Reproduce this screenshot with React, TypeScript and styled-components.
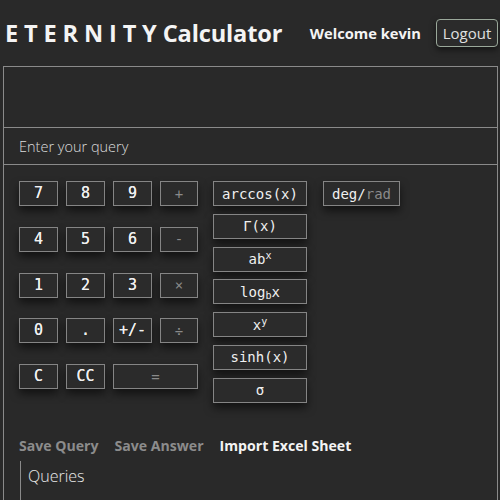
import React from "react";
import styled, { createGlobalStyle } from "styled-components";

const Global = createGlobalStyle`
  html, body { margin: 0; padding: 0; background: #292929; }
  body { font-family: "Open Sans", "Noto Sans", sans-serif; color: #f2f2f2; }
  * { box-sizing: border-box; }
`;

const Page = styled.div`
  width: 500px;
  height: 500px;
  overflow: hidden;
  background: #292929;
`;

const Header = styled.header`
  display: flex;
  align-items: center;
  height: 66px;
  padding: 0 2px 0 5px;
`;

const Title = styled.h1`
  margin: 0;
  font-size: 23.6px;
  font-weight: 700;
  color: #f4f4f4;
  white-space: pre;
  letter-spacing: -0.15px;
`;

const Welcome = styled.span`
  margin-left: auto;
  font-size: 14.7px;
  font-weight: 700;
  color: #f4f4f4;
`;

const LogoutButton = styled.button`
  margin-left: 15px;
  height: 28px;
  width: 62px;
  padding: 0;
  border: 1px solid #9aa89a;
  border-radius: 4px;
  background: #2b2b2b;
  color: #e0e0e0;
  font-family: "Open Sans", sans-serif;
  font-size: 15px;
  box-shadow: 0 3px 6px rgba(0, 0, 0, 0.5);
`;

const Panel = styled.section`
  margin-left: 3px;
  width: 495px;
  border-top: 1px solid #8a8a8a;
  border-left: 1px solid #8a8a8a;
  border-right: 1px solid #8a8a8a;
  height: 434px;
`;

const Display = styled.div`
  height: 61px;
  border-bottom: 1px solid #8a8a8a;
`;

const QueryInput = styled.div`
  height: 37px;
  border-bottom: 1px solid #8a8a8a;
  display: flex;
  align-items: center;
  padding-left: 15px;
  font-size: 14.5px;
  font-weight: 300;
  color: #dcdcdc;
`;

const KeypadArea = styled.div`
  display: flex;
  align-items: flex-start;
  padding: 16px 0 0 15px;
`;

const Digits = styled.div`
  display: grid;
  grid-template-columns: 39px 39px 39px 38px;
  grid-auto-rows: 25px;
  column-gap: 8px;
  row-gap: 20.8px;
`;

const Key = styled.button<{ $muted?: boolean; $span?: number }>`
  grid-column: span ${(p) => p.$span ?? 1};
  padding: 0;
  border: 1px solid #858585;
  background: #2b2b2b;
  color: ${(p) => (p.$muted ? "#8a8a8a" : "#f0f0f0")};
  font-family: "DejaVu Sans Mono", "Liberation Mono", monospace;
  font-size: 14px;
  font-weight: 400;
  box-shadow: 0 5px 8px rgba(0, 0, 0, 0.55);
  line-height: 1;
`;

const DigitKey = styled(Key)`
  font-size: 15px;
  text-shadow: 0 0 0.4px #f0f0f0;
`;

const Functions = styled.div`
  display: flex;
  flex-direction: column;
  gap: 7.8px;
  margin-left: 15px;
`;

const FnKey = styled(Key)`
  width: 94px;
  height: 25px;
`;

const Sup = styled.sup`
  font-size: 0.72em;
  line-height: 0;
  vertical-align: 0.45em;
`;

const Sub = styled.sub`
  font-size: 0.72em;
  line-height: 0;
  vertical-align: -0.15em;
`;

const DegKey = styled(Key)`
  width: 77px;
  height: 25px;
  margin-left: 16px;
`;

const Faded = styled.span`
  color: #8a8a8a;
`;

const Actions = styled.div`
  display: flex;
  gap: 16px;
  padding: 33px 0 0 15px;
`;

const ActionLink = styled.span<{ $active?: boolean }>`
  font-size: 14.1px;
  font-weight: 700;
  color: ${(p) => (p.$active ? "#f4f4f4" : "#8c8c8c")};
`;

const Queries = styled.div`
  margin: 6px 0 0 16px;
  border-left: 1px solid #8a8a8a;
  padding: 4px 0 0 7px;
  height: 60px;
  font-size: 16px;
  font-weight: 300;
  color: #eaeaea;
`;

export default function App() {
  const rows: { label: string; muted?: boolean; span?: number }[][] = [
    [{ label: "7" }, { label: "8" }, { label: "9" }, { label: "+", muted: true }],
    [{ label: "4" }, { label: "5" }, { label: "6" }, { label: "-", muted: true }],
    [{ label: "1" }, { label: "2" }, { label: "3" }, { label: "×", muted: true }],
    [{ label: "0" }, { label: "." }, { label: "+/-" }, { label: "÷", muted: true }],
    [{ label: "C" }, { label: "CC" }, { label: "=", muted: true, span: 2 }],
  ];
  return (
    <Page>
      <Global />
      <Header>
        <Title>E T E R N I T Y Calculator</Title>
        <Welcome>Welcome kevin</Welcome>
        <LogoutButton>Logout</LogoutButton>
      </Header>
      <Panel>
        <Display />
        <QueryInput>Enter your query</QueryInput>
        <KeypadArea>
          <Digits>
            {rows.flat().map((k, i) =>
              k.muted ? (
                <Key key={i} $muted $span={k.span}>
                  {k.label}
                </Key>
              ) : (
                <DigitKey key={i}>{k.label}</DigitKey>
              )
            )}
          </Digits>
          <Functions>
            <FnKey>arccos(x)</FnKey>
            <FnKey>Γ(x)</FnKey>
            <FnKey>
              ab<Sup>x</Sup>
            </FnKey>
            <FnKey>
              log<Sub>b</Sub>x
            </FnKey>
            <FnKey>
              x<Sup>y</Sup>
            </FnKey>
            <FnKey>sinh(x)</FnKey>
            <FnKey>σ</FnKey>
          </Functions>
          <DegKey>
            deg/<Faded>rad</Faded>
          </DegKey>
        </KeypadArea>
        <Actions>
          <ActionLink>Save Query</ActionLink>
          <ActionLink>Save Answer</ActionLink>
          <ActionLink $active>Import Excel Sheet</ActionLink>
        </Actions>
        <Queries>Queries</Queries>
      </Panel>
    </Page>
  );
}
